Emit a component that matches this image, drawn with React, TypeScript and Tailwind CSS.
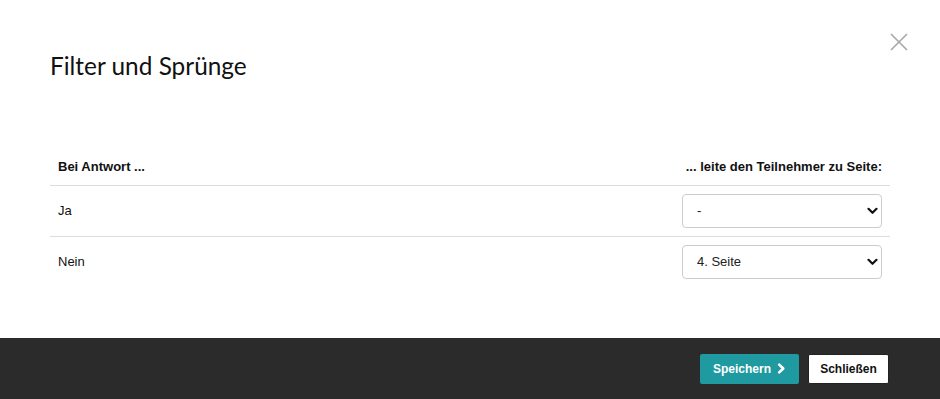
import React from "react";

function Chevron() {
  return (
    <svg width="11" height="8" viewBox="0 0 11 8" className="pointer-events-none absolute right-[4px] top-1/2 -translate-y-1/2">
      <path d="M1.5 1.8 L5.5 5.8 L9.5 1.8" fill="none" stroke="#111" strokeWidth="2.2" strokeLinecap="round" strokeLinejoin="round" />
    </svg>
  );
}

function Select({ value, options }: { value: string; options: string[] }) {
  return (
    <div className="relative w-[200px] h-[34px]">
      <select
        defaultValue={value}
        className="appearance-none w-full h-full rounded-[4px] border border-[#cccccc] bg-white pl-[14px] pr-6 text-[13px] text-[#222] outline-none"
        style={{ fontFamily: '"Liberation Sans", Arial, sans-serif' }}
      >
        {options.map((o) => (
          <option key={o} value={o}>
            {o}
          </option>
        ))}
      </select>
      <Chevron />
    </div>
  );
}

export default function App() {
  const opts = ["-", "1. Seite", "2. Seite", "3. Seite", "4. Seite"];
  return (
    <div className="w-full h-[399px] flex flex-col bg-white" style={{ fontFamily: '"Liberation Sans", Arial, sans-serif' }}>
      <div className="relative flex-1 px-[50px] pt-[50px]">
        <button className="absolute right-[32px] top-[33px] w-[18px] h-[18px] flex items-center justify-center">
          <svg width="18" height="18" viewBox="0 0 18 18">
            <path d="M1 1 L17 17 M17 1 L1 17" stroke="#a6a6a6" strokeWidth="1.6" />
          </svg>
        </button>
        <h1 className="text-[24.4px] leading-[32px] text-[#111]" style={{ fontFamily: 'Lato, "Noto Sans", sans-serif' }}>
          Filter und Sprünge
        </h1>
        <div className="mt-[73px] text-[13px] text-[#111]">
          <div className="flex justify-between font-bold px-[8px] pt-[2px] h-[31px] leading-[20px] border-b border-[#dddddd]">
            <span>Bei Antwort ...</span>
            <span>... leite den Teilnehmer zu Seite:</span>
          </div>
          <div className="flex justify-between items-center px-[8px] h-[51px] border-b border-[#dddddd]">
            <span>Ja</span>
            <Select value="-" options={opts} />
          </div>
          <div className="flex justify-between items-center px-[8px] h-[50px]">
            <span>Nein</span>
            <Select value="4. Seite" options={opts} />
          </div>
        </div>
      </div>
      <div className="h-[61px] bg-[#2b2b2b] flex items-center justify-end gap-[9px] pr-[51px]">
        <button className="h-[30px] w-[99px] rounded-[2px] bg-[#1f9aa0] text-white text-[12px] font-bold flex items-center justify-center gap-[6px]">
          <span>Speichern</span>
          <svg width="9" height="11" viewBox="0 0 9 11">
            <path d="M2.2 1.6 L6.2 5.5 L2.2 9.4" fill="none" stroke="#fff" strokeWidth="2.6" strokeLinecap="round" strokeLinejoin="round" />
          </svg>
        </button>
        <button className="h-[30px] w-[81px] rounded-[2px] bg-white border border-[#222] text-[#111] text-[12px] font-bold flex items-center justify-center">
          Schließen
        </button>
      </div>
    </div>
  );
}
